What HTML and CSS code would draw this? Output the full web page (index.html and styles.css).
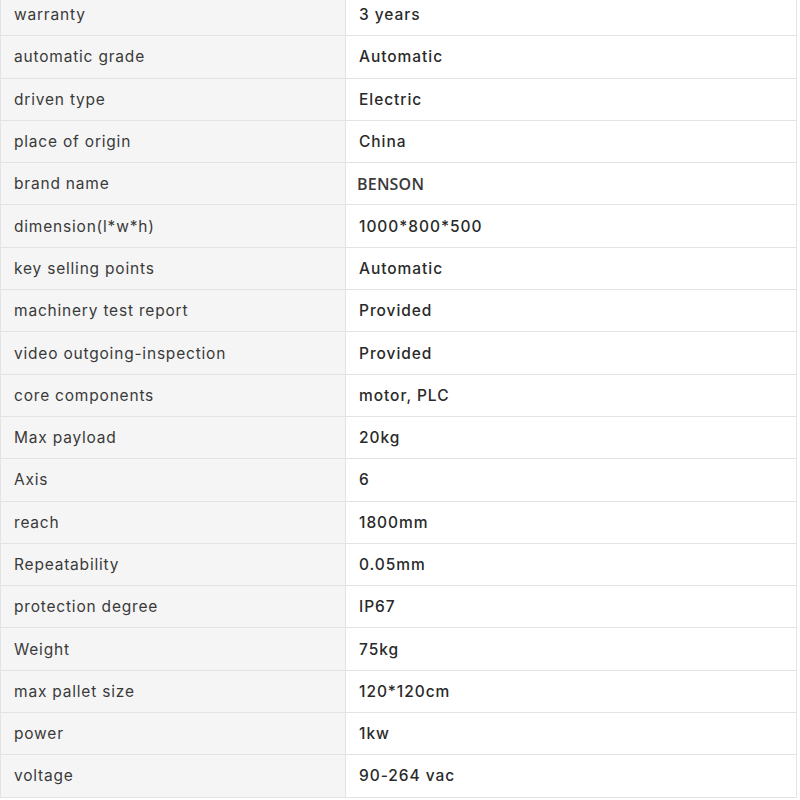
FILE: index.html
```html
<!DOCTYPE html>
<html>
<head>
<meta charset="utf-8">
<link rel="stylesheet" href="styles.css">
</head>
<body>
<table class="spec">
<tbody>
<tr><td class="k">warranty</td><td class="v">3 years</td></tr>
<tr><td class="k">automatic grade</td><td class="v">Automatic</td></tr>
<tr><td class="k">driven type</td><td class="v">Electric</td></tr>
<tr><td class="k">place of origin</td><td class="v">China</td></tr>
<tr><td class="k">brand name</td><td class="v brand">BENSON</td></tr>
<tr><td class="k">dimension(l*w*h)</td><td class="v">1000*800*500</td></tr>
<tr><td class="k">key selling points</td><td class="v">Automatic</td></tr>
<tr><td class="k">machinery test report</td><td class="v">Provided</td></tr>
<tr><td class="k">video outgoing-inspection</td><td class="v">Provided</td></tr>
<tr><td class="k">core components</td><td class="v">motor, PLC</td></tr>
<tr><td class="k">Max payload</td><td class="v">20kg</td></tr>
<tr><td class="k">Axis</td><td class="v">6</td></tr>
<tr><td class="k">reach</td><td class="v">1800mm</td></tr>
<tr><td class="k">Repeatability</td><td class="v">0.05mm</td></tr>
<tr><td class="k">protection degree</td><td class="v">IP67</td></tr>
<tr><td class="k">Weight</td><td class="v">75kg</td></tr>
<tr><td class="k">max pallet size</td><td class="v">120*120cm</td></tr>
<tr><td class="k">power</td><td class="v">1kw</td></tr>
<tr><td class="k">voltage</td><td class="v">90-264 vac</td></tr>
</tbody>
</table>
</body>
</html>
```

FILE: styles.css
```css
html, body {
  margin: 0;
  padding: 0;
  background: #ffffff;
}
body {
  font-family: Inter, "Noto Sans", sans-serif;
  color: #333333;
}
.spec {
  border-collapse: collapse;
  width: 797px;
  margin-top: -7px;
  table-layout: fixed;
}
.spec td {
  height: 42.3px;
  padding: 0 13px;
  font-size: 15.5px;
  border: 1px solid #e3e3e3;
  box-sizing: border-box;
  vertical-align: middle;
  letter-spacing: 0.8px;
}
.spec .k {
  width: 345px;
  background: #f5f5f5;
  color: #3a3a3a;
}
.spec .v {
  background: #ffffff;
  color: #2a2a2a;
  font-weight: 500;
  letter-spacing: 0.95px;
}
.spec .brand {
  padding-left: 11px;
  font-family: "Open Sans", sans-serif;
  font-size: 16px;
  font-weight: 600;
  color: #3a3a3a;
  letter-spacing: 0.2px;
}
```
